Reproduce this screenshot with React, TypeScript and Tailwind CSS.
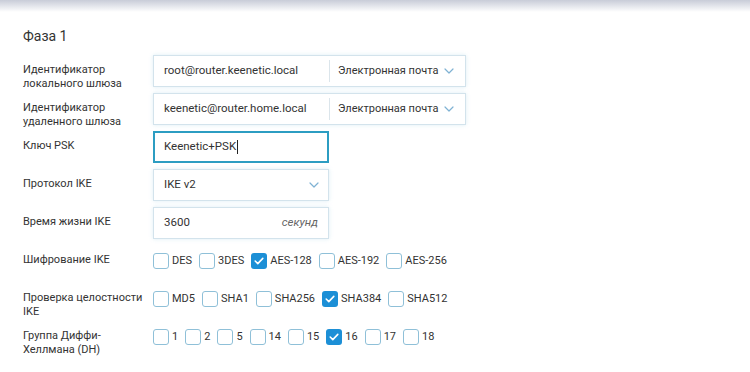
import { ReactNode } from 'react';

const Chevron = () => (
  <svg width="10" height="6" viewBox="0 0 10 6" fill="none" className="shrink-0">
    <path d="M1 1l4 4 4-4" stroke="#7fb2d3" strokeWidth="1.2" strokeLinecap="round" strokeLinejoin="round" />
  </svg>
);

const Row = ({ label, children }: { label: ReactNode; children: ReactNode }) => (
  <div className="flex h-8 items-center">
    <div className="w-[130px] shrink-0 self-start whitespace-nowrap pt-[8px] text-[11px] leading-[14px] text-[#333]">{label}</div>
    <div className="flex items-center">{children}</div>
  </div>
);

const box = 'flex h-8 items-center border border-[#d3e3ec] bg-white shadow-[0_0_4px_rgba(140,200,225,0.3)]';

const Check = ({ label, on }: { label: string; on?: boolean }) => (
  <label className="flex items-center">
    {on ? (
      <span className="flex h-[16px] w-[16px] items-center justify-center rounded-[3px] bg-[#1c8fd6]">
        <svg width="10" height="8" viewBox="0 0 10 8" fill="none">
          <path d="M1.2 4l2.6 2.6L8.8 1.4" stroke="white" strokeWidth="1.6" strokeLinecap="round" strokeLinejoin="round" />
        </svg>
      </span>
    ) : (
      <span className="h-[16px] w-[16px] rounded-[3px] border border-[#8fc0d8] bg-white" />
    )}
    <span className="ml-[3px] text-[11px] text-[#333]">{label}</span>
  </label>
);

const Checks = ({ items, on }: { items: string[]; on: string }) => (
  <div className="flex items-center gap-x-[7px]">
    {items.map((i) => (
      <Check key={i} label={i} on={i === on} />
    ))}
  </div>
);

export default function App() {
  return (
    <div className="h-[372px] w-[750px] overflow-hidden bg-white" style={{ fontFamily: 'Roboto, "Noto Sans", sans-serif' }}>
      <div className="h-3 bg-gradient-to-b from-[#c8ccd8] to-white" />
      <div className="pl-[23px] pt-[14px]">
        <h2 className="mb-[9px] text-[14px] leading-5 text-[#333]">Фаза 1</h2>
        <div className="flex flex-col gap-[6px]">
          <Row label={<>Идентификатор<br />локального шлюза</>}>
            <div className={box + ' w-[313px]'}>
              <span className="w-[175px] pl-[10px] text-[11.5px] text-[#333]">root@router.keenetic.local</span>
              <span className="h-[22px] w-px bg-[#dbe5eb]" />
              <span className="flex flex-1 items-center justify-between pl-[8px] pr-[11px] text-[11px] text-[#333]">
                Электронная почта <Chevron />
              </span>
            </div>
          </Row>
          <Row label={<>Идентификатор<br />удаленного шлюза</>}>
            <div className={box + ' w-[313px]'}>
              <span className="w-[175px] pl-[10px] text-[11.5px] text-[#333]">keenetic@router.home.local</span>
              <span className="h-[22px] w-px bg-[#dbe5eb]" />
              <span className="flex flex-1 items-center justify-between pl-[8px] pr-[11px] text-[11px] text-[#333]">
                Электронная почта <Chevron />
              </span>
            </div>
          </Row>
          <Row label="Ключ PSK">
            <div className="flex h-8 w-[176px] items-center border-2 border-[#2c9dc2] bg-white pl-[9px] text-[11.5px] text-[#333]">
              Keenetic+PSK<span className="ml-px h-[14px] w-px bg-[#222]" />
            </div>
          </Row>
          <Row label="Протокол IKE">
            <div className={box + ' w-[176px] justify-between pl-[10px] pr-[9px] text-[11.5px] text-[#333]'}>
              IKE v2 <Chevron />
            </div>
          </Row>
          <Row label="Время жизни IKE">
            <div className={box + ' w-[176px] justify-between pl-[10px] pr-[10px] text-[11.5px] text-[#333]'}>
              3600 <span className="italic text-[#666]">секунд</span>
            </div>
          </Row>
          <Row label="Шифрование IKE">
            <Checks items={['DES', '3DES', 'AES-128', 'AES-192', 'AES-256']} on="AES-128" />
          </Row>
          <Row label={<>Проверка целостности<br />IKE</>}>
            <Checks items={['MD5', 'SHA1', 'SHA256', 'SHA384', 'SHA512']} on="SHA384" />
          </Row>
          <Row label={<>Группа Диффи-<br />Хеллмана (DH)</>}>
            <Checks items={['1', '2', '5', '14', '15', '16', '17', '18']} on="16" />
          </Row>
        </div>
      </div>
    </div>
  );
}
